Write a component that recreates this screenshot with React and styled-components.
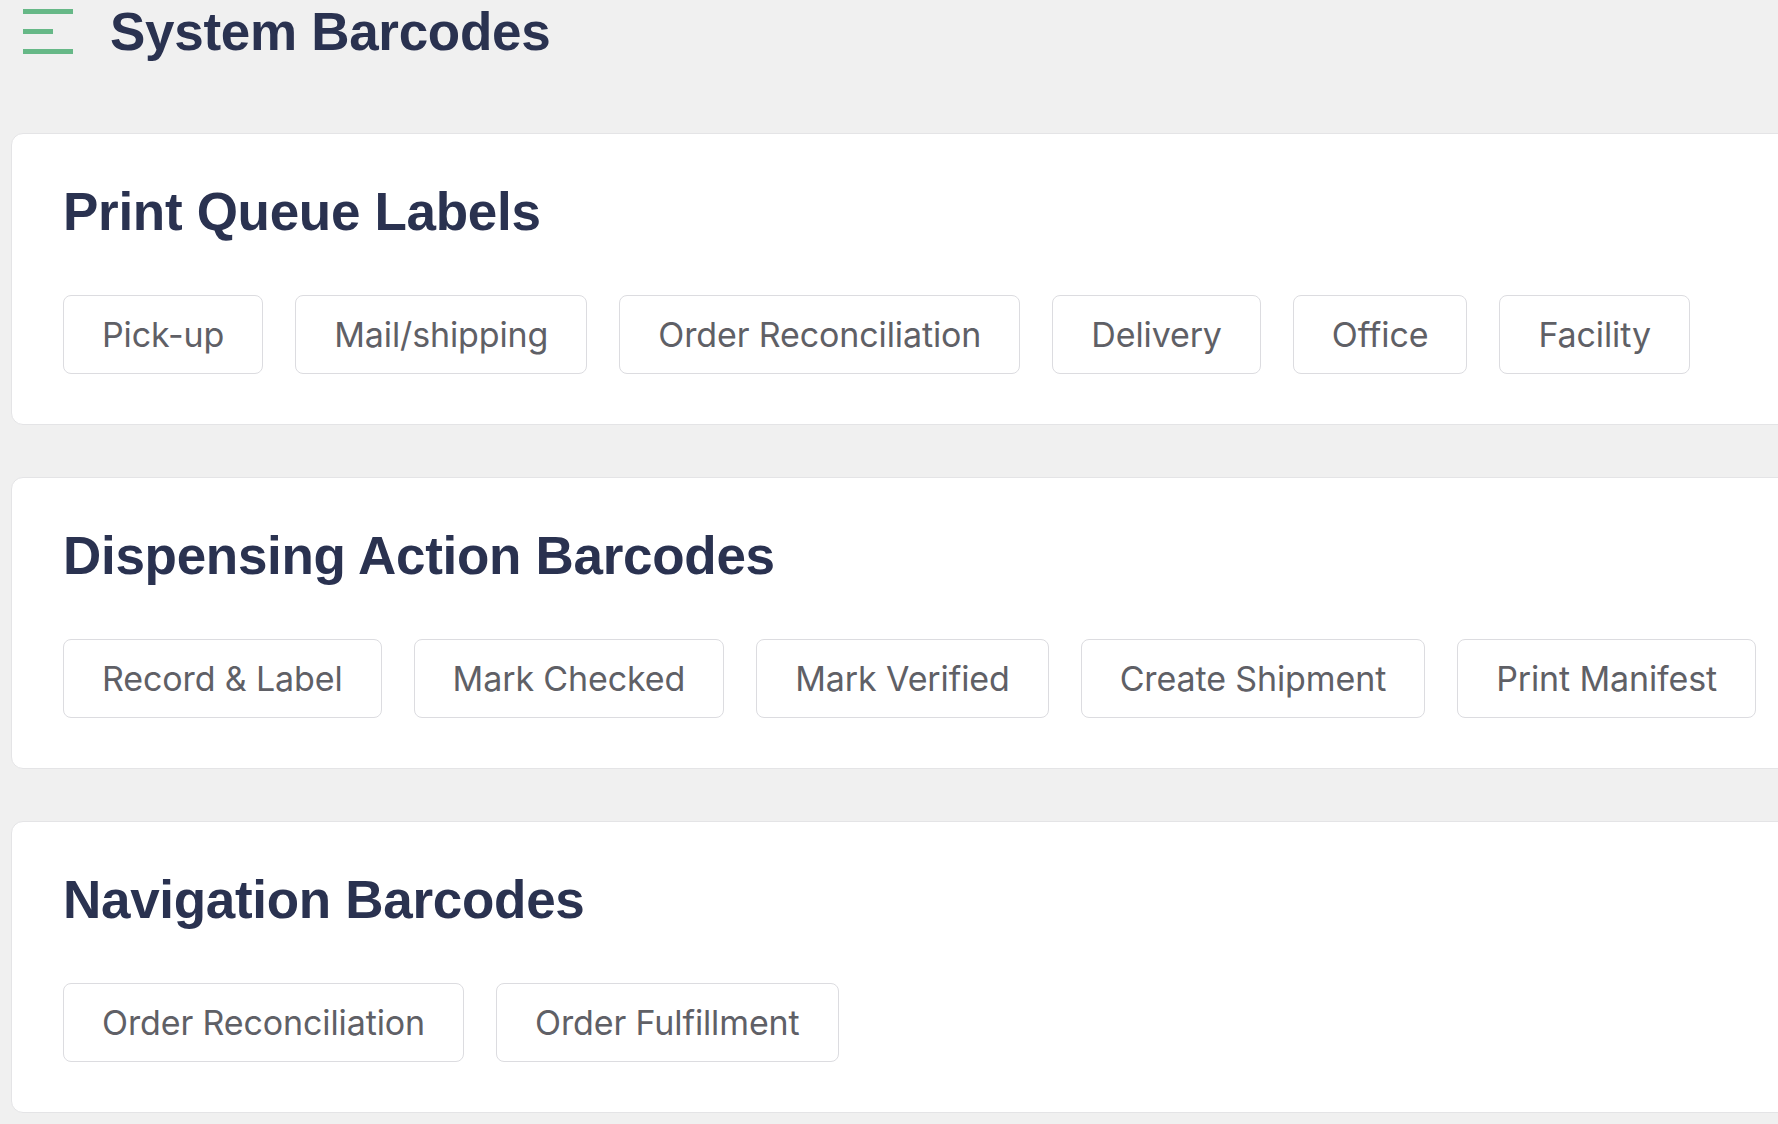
import React from 'react';
import styled, { createGlobalStyle } from 'styled-components';

const GlobalStyle = createGlobalStyle`
  html, body {
    margin: 0;
    padding: 0;
    background: #f0f0f0;
    overflow-x: hidden;
  }
  * {
    box-sizing: border-box;
  }
`;

const Page = styled.main`
  width: 100%;
  min-height: 100vh;
  display: flex;
  flex-direction: column;
  padding: 0 0 0 11px;
  font-family: "Liberation Sans", Arial, sans-serif;
`;

const Header = styled.header`
  display: flex;
  align-items: center;
  gap: 37px;
  height: 64px;
  padding-left: 12px;
  margin-bottom: 69px;
`;

const MenuIcon = styled.div`
  width: 50px;
  height: 45px;
  display: flex;
  flex-direction: column;
  justify-content: space-between;
  margin-top: -2px;
`;

const MenuBar = styled.span`
  display: block;
  height: 5px;
  width: ${p => p.$short ? '30px' : '50px'};
  background: #66b887;
`;

const PageTitle = styled.h1`
  margin: 0;
  font-size: 53px;
  line-height: 1.2;
  font-weight: 700;
  color: #2a3250;
  letter-spacing: -0.3px;
`;

const Cards = styled.div`
  display: flex;
  flex-direction: column;
  gap: 52px;
`;

const Card = styled.section`
  width: 1800px;
  height: 292px;
  background: #ffffff;
  border: 1.5px solid #e4e4e6;
  border-radius: 12px;
  padding: 46px 50px 0 51px;
  display: flex;
  flex-direction: column;
`;

const CardTitle = styled.h2`
  margin: 0 0 51px;
  font-size: 53px;
  line-height: 1.2;
  font-weight: 700;
  color: #2a3250;
  letter-spacing: -0.3px;
`;

const ButtonRow = styled.div`
  display: flex;
  gap: 32px;
`;

const BarcodeButton = styled.button`
  height: 79px;
  display: inline-flex;
  align-items: center;
  padding: 0 38px;
  background: #ffffff;
  border: 1.5px solid #dcdce0;
  border-radius: 8px;
  font-family: Inter, "Noto Sans", sans-serif;
  font-size: 34px;
  font-weight: 400;
  letter-spacing: -0.12px;
  color: #5f6066;
  cursor: pointer;
  white-space: nowrap;
`;

const sections = [
  {
    title: 'Print Queue Labels',
    items: ['Pick-up', 'Mail/shipping', 'Order Reconciliation', 'Delivery', 'Office', 'Facility'],
  },
  {
    title: 'Dispensing Action Barcodes',
    items: ['Record & Label', 'Mark Checked', 'Mark Verified', 'Create Shipment', 'Print Manifest'],
  },
  {
    title: 'Navigation Barcodes',
    items: ['Order Reconciliation', 'Order Fulfillment'],
  },
];

export default function App() {
  return (
    <>
      <GlobalStyle />
      <Page>
        <Header>
          <MenuIcon>
            <MenuBar />
            <MenuBar $short />
            <MenuBar />
          </MenuIcon>
          <PageTitle>System Barcodes</PageTitle>
        </Header>
        <Cards>
          {sections.map(section => (
            <Card key={section.title}>
              <CardTitle>{section.title}</CardTitle>
              <ButtonRow>
                {section.items.map(item => (
                  <BarcodeButton key={item}>{item}</BarcodeButton>
                ))}
              </ButtonRow>
            </Card>
          ))}
        </Cards>
      </Page>
    </>
  );
}
